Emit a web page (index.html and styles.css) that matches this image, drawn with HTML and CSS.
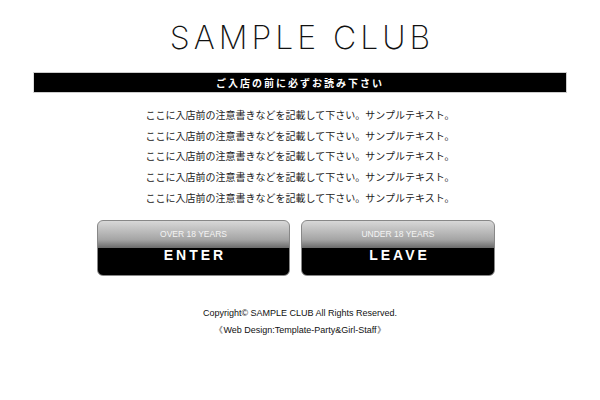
FILE: index.html
```html
<!DOCTYPE html>
<html lang="ja">
<head>
<meta charset="utf-8">
<title>SAMPLE CLUB</title>
<link rel="stylesheet" href="styles.css">
</head>
<body>
<div class="page">
  <h1 class="logo">SAMPLE CLUB</h1>
  <div class="notice-bar">ご入店の前に必ずお読み下さい</div>
  <div class="notes">
    <p>ここに入店前の注意書きなどを記載して下さい。サンプルテキスト。</p>
    <p>ここに入店前の注意書きなどを記載して下さい。サンプルテキスト。</p>
    <p>ここに入店前の注意書きなどを記載して下さい。サンプルテキスト。</p>
    <p>ここに入店前の注意書きなどを記載して下さい。サンプルテキスト。</p>
    <p>ここに入店前の注意書きなどを記載して下さい。サンプルテキスト。</p>
  </div>
  <div class="buttons">
    <a class="btn" href="#"><span class="btn-sub">OVER 18 YEARS</span><span class="btn-main">ENTER</span></a>
    <a class="btn btn-wide" href="#"><span class="btn-sub">UNDER 18 YEARS</span><span class="btn-main">LEAVE</span></a>
  </div>
  <div class="footer">
    <p>Copyright© SAMPLE CLUB All Rights Reserved.</p>
    <p>《Web Design:Template-Party&amp;Girl-Staff》</p>
  </div>
</div>
</body>
</html>
```
FILE: styles.css
```css
html, body {
  margin: 0;
  padding: 0;
  background: #fff;
}
.page {
  width: 534px;
  margin: 0 auto;
  padding-top: 20px;
}
.logo {
  margin: 0;
  height: 38px;
  line-height: 36px;
  text-align: center;
  font-family: "Inter", "DejaVu Sans", sans-serif;
  font-weight: 250;
  font-size: 32px;
  letter-spacing: 4px;
  padding-left: 4px;
  color: #111;
}
.notice-bar {
  margin-top: 14px;
  height: 19px;
  line-height: 19px;
  background: #000;
  border: 1px solid #ccc;
  border-left-color: #ddd;
  color: #fff;
  text-align: center;
  font-family: "Noto Sans CJK JP", sans-serif;
  font-weight: 700;
  font-size: 10px;
  letter-spacing: 2px;
}
.notes {
  margin-top: 12px;
  text-align: center;
  font-family: "Noto Sans CJK JP", sans-serif;
  font-size: 10px;
  color: #222;
}
.notes p {
  margin: 0;
  height: 20.7px;
  line-height: 20.7px;
}
.buttons {
  display: flex;
  gap: 11px;
  margin: 12px 0 0 64px;
}
.btn {
  width: 193px;
  height: 56px;
  box-sizing: border-box;
  border-radius: 6px;
  border: 1px solid #888;
  background: linear-gradient(to bottom, #d8d8d8 0%, #a4a4a4 35%, #6a6a6a 50%, #000 50%, #000 100%);
  display: flex;
  flex-direction: column;
  align-items: center;
  text-decoration: none;
  overflow: hidden;
}
.btn-wide {
  width: 194px;
}
.btn-sub {
  height: 25px;
  line-height: 26px;
  font-family: "Liberation Sans", sans-serif;
  font-size: 8.5px;
  color: #f4f4f4;
}
.btn-main {
  line-height: 18px;
  font-family: "Liberation Sans", sans-serif;
  font-weight: 700;
  font-size: 14px;
  letter-spacing: 3px;
  padding-left: 3px;
  color: #fff;
}
.footer {
  margin-top: 29px;
  text-align: center;
  font-family: "Liberation Sans", sans-serif;
  font-size: 9px;
  color: #111;
}
.footer p {
  margin: 0;
  height: 17px;
  line-height: 17px;
}
```
